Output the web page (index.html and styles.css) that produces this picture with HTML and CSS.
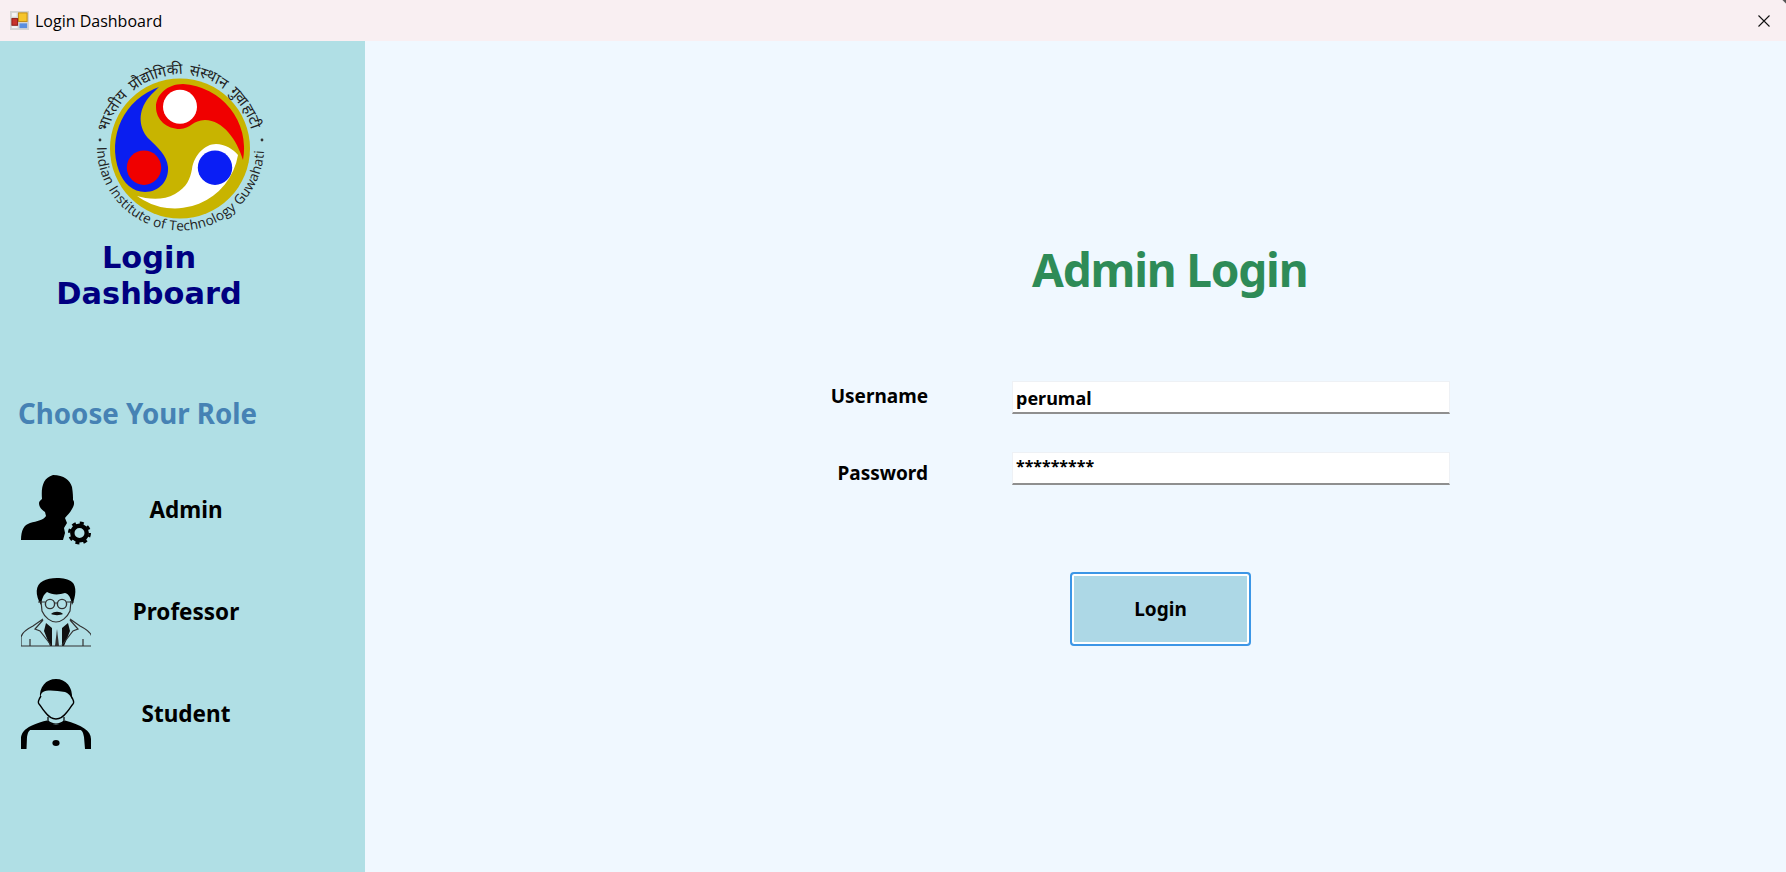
FILE: index.html
```html
<!DOCTYPE html>
<html lang="en">
<head>
    <meta charset="UTF-8">
    <meta name="viewport" content="width=device-width, initial-scale=1.0">
    <title>Login Dashboard</title>
    <link rel="stylesheet" href="styles.css">
</head>

<body>
    <header class="titlebar">
        <svg class="app-icon" viewBox="0 0 20 20">
            <rect x="0" y="0" width="20" height="20" fill="#d4d4d4"/>
            <rect x="9" y="2" width="9" height="9" fill="#f6c52c" stroke="#c08a10" stroke-width="1"/>
            <rect x="2" y="8" width="6" height="7" fill="#c8332b" stroke="#8a1a16" stroke-width="1"/>
            <rect x="10" y="13" width="8" height="5" fill="#5a8fe0"/>
            <rect x="2" y="2" width="5" height="4" fill="#f4f4f4"/>
            <rect x="2" y="16" width="6" height="2" fill="#f4f4f4"/>
        </svg>
        <span class="app-title">Login Dashboard</span>
        <svg class="close-icon" viewBox="0 0 12 12">
            <path d="M0.5 0.5L11.5 11.5M11.5 0.5L0.5 11.5" stroke="#111" stroke-width="1.1" fill="none"/>
        </svg>
    </header>

    <div class="window">
        <aside class="sidebar">
            <svg class="logo" viewBox="0 0 195 190">
                <defs>
                    <path id="arc-bottom" d="M12 92 A83.5 83.5 0 0 0 179 92"/>
                    <path id="arc-top" d="M22 81.5 A74 74 0 0 1 168.5 85"/>
                </defs>
                <circle cx="95" cy="93.5" r="70" fill="#c8b400"/>
                <path d="M74 32 A65 65 0 0 0 34 116 C38 128 48 137 60 137 C74 137 84 126 83 112 C82 100 72 92 64 84 C56 76 52 62 60 48 C64 41 69 37 74 32Z" fill="#0a1ef0"/>
                <path d="M158 105 A64.5 64.5 0 0 0 98 29 C82 29 71 40 71 52 C71 65 82 74 95 74 C105 74 108 65 120 65 C138 65 152 85 158 105Z" fill="#f00000"/>
                <path d="M153 100 A64 64 0 0 1 52 141 C62 144 78 146 90 139 C102 132 105 124 107 114 C109 100 120 89 131 89 C140 89 148 94 153 100Z" fill="#fff"/>
                <circle cx="95" cy="51.7" r="17" fill="#fff"/>
                <circle cx="59" cy="112.7" r="17.2" fill="#f00000"/>
                <circle cx="130" cy="112.7" r="17.2" fill="#0a1ef5"/>
                <circle cx="15" cy="85" r="1.4" fill="#333"/>
                <circle cx="177" cy="85" r="1.4" fill="#333"/>
                <text class="logo-text"><textPath href="#arc-bottom" textLength="258">Indian Institute of Technology Guwahati</textPath></text>
                <text class="logo-text logo-text-top"><textPath href="#arc-top" startOffset="4">भारतीय प्रौद्योगिकी संस्थान गुवाहाटी</textPath></text>
            </svg>

            <h1 class="brand">Login<br>Dashboard</h1>
            <h2 class="choose">Choose Your Role</h2>

            <div class="role">
                <svg class="role-icon" viewBox="11 4 70 70">
                    <path d="M11 69 C11 59 14 54 20 52 C27 50 34 49 36 45 L35 41 C31 38 29 36 29 32 C29 30 31 29 32 28 C31 16 33 7 43 4 C54 4 60 9 62 16 C63 22 63 26 63 29 C65 31 64 35 62 38 C60 42 57 44 55 47 L57 52 L54 57 L55 62 L53 69 Z" fill="#000"/>
                    <circle cx="69.5" cy="62" r="7.2" fill="none" stroke="#000" stroke-width="4.4"/>
                    <circle cx="69.5" cy="62" r="10.2" fill="none" stroke="#000" stroke-width="2.6" stroke-dasharray="4 4.01"/>
                </svg>
                <span class="role-name">Admin</span>
            </div>
            <div class="role">
                <svg class="role-icon" viewBox="11 6 70 70">
                    <path d="M31 34 C25 24 25 14 33 10 C40 6 56 6 62 11 C67 15 66 26 62 34 C61 27 59 23 55 22 C49 24 42 24 37 21 C33 24 32 28 31 34Z" fill="#000"/>
                    <path d="M31 30 L32 40 C35 47 41 51 46 51 C51 51 57 47 60 40 L61 30" fill="none" stroke="#333" stroke-width="1.2"/>
                    <circle cx="40" cy="33" r="4.6" fill="none" stroke="#333" stroke-width="1.4"/>
                    <circle cx="52" cy="33" r="4.6" fill="none" stroke="#333" stroke-width="1.4"/>
                    <path d="M44.6 32 H47.4 M28 31 H35.4 M56.6 31 H64" stroke="#333" stroke-width="1.2"/>
                    <path d="M41 43 C44 40 50 40 53 43 C50 44.5 44 44.5 41 43Z" fill="#111"/>
                    <path d="M36 52 L42 57 L42 75 L40 75 L34 60Z M58 52 L52 57 L52 75 L54 75 L60 60Z" fill="#111"/>
                    <path d="M47 58 L45 75 H49Z" fill="#333"/>
                    <path d="M11 75 V66 C12 62 17 58 23 55 L33 48 M82 75 V66 C81 62 76 58 70 55 L60 48 M11 75 H82 M33 49 L25 58 L30 60 L41 74 M60 49 L68 58 L63 60 L52 74 M20 68 V75 M73 68 V75" fill="none" stroke="#333" stroke-width="1.2"/>
                </svg>
                <span class="role-name">Professor</span>
            </div>
            <div class="role">
                <svg class="role-icon" viewBox="11 8 70 70">
                    <path d="M30 27 C29 16 36 8 46 8 C56 8 63 16 62 28 C60 24 58 22 55 21 C47 20 38 18 33 21 C31 22 31 24 30 27Z" fill="#000"/>
                    <path d="M31 25 C29 28 27 31 29 33 C31 35 32 38 35 41 C38 45 42 48 46 48 C50 48 54 45 57 41 C60 38 61 35 63 33 C65 31 63 28 61 25" fill="none" stroke="#000" stroke-width="1.4"/>
                    <path d="M38 46 V50 C42 54 50 54 54 50 V46" fill="none" stroke="#000" stroke-width="1.2"/>
                    <path d="M11 78 L11 68 C11 60 18 54 37 49.5 C42 55 50 55 55 49.5 C72 54 81 60 81 68 L81 78 H75 L74 66 C73 61 72 59 70 59 L21 59 C19 59 18 61 17 66 L16.5 78Z" fill="#000"/>
                    <ellipse cx="46" cy="72" rx="3.6" ry="3" fill="#000"/>
                </svg>
                <span class="role-name">Student</span>
            </div>
        </aside>

        <main class="content">
            <h2 class="form-title">Admin Login</h2>
            <form class="login-form">
                <label class="field-label" for="username">Username</label>
                <input class="field-input" type="text" id="username" value="perumal">
                <label class="field-label field-label-low" for="password">Password</label>
                <input class="field-input field-input-masked" type="text" id="password" value="*********">
            </form>
            <button class="login-btn" type="button">Login</button>
        </main>
    </div>
</body>
</html>
```

FILE: styles.css
```css
body {
    margin: 0;
    height: 872px;
    overflow: hidden;
    font-family: "Noto Sans", Tahoma, sans-serif;
    color: #000;
}

.titlebar {
    height: 41px;
    display: flex;
    align-items: center;
    padding-left: 10px;
    padding-right: 16px;
    background: linear-gradient(225deg, #555 2px, transparent 3px), #f9eff2;
}

.app-icon {
    width: 19px;
    height: 19px;
    margin-right: 6px;
}

.app-title {
    font-family: "Open Sans", sans-serif;
    font-size: 16px;
    flex: 1;
}

.close-icon {
    width: 12px;
    height: 12px;
}

.window {
    display: flex;
    height: 831px;
}

.sidebar {
    width: 365px;
    background-color: #b0dfe5;
    flex-shrink: 0;
}

.logo {
    display: block;
    width: 195px;
    height: 190px;
    margin-left: 85px;
    margin-top: 14px;
}

.logo-text {
    font-family: "Open Sans", sans-serif;
    font-size: 13.5px;
    fill: #222;
}

.logo-text-top {
    font-size: 15px;
    word-spacing: 2px;
}

.brand {
    margin: -5px 0 0 0;
    width: 298px;
    text-align: center;
    font-family: "DejaVu Sans", Verdana, sans-serif;
    font-size: 30.4px;
    line-height: 36px;
    font-weight: bold;
    color: #000080;
}

.choose {
    margin: 83px 0 0 18px;
    font-size: 27.7px;
    line-height: 36px;
    font-weight: bold;
    color: #4682b4;
}

.role {
    display: flex;
    align-items: center;
    height: 70px;
    margin-top: 32px;
    padding-left: 21px;
}

.role:first-of-type {
    margin-top: 44px;
}

.role-icon {
    width: 70px;
    height: 70px;
}

.role-name {
    width: 190px;
    padding-bottom: 2px;
    text-align: center;
    font-size: 22.5px;
    font-weight: bold;
}

.content {
    flex: 1;
    background-color: #f0f8ff;
}

.form-title {
    margin: 0 0 0 667px;
    padding-top: 197px;
    font-size: 46px;
    line-height: 62px;
    letter-spacing: -1.2px;
    font-weight: bold;
    color: #2e8b57;
}

.login-form {
    display: grid;
    grid-template-columns: 143px 438px;
    column-gap: 84px;
    row-gap: 38px;
    margin: 81px 0 0 420px;
}

.field-label {
    padding-top: 1px;
    text-align: right;
    font-size: 19px;
    font-weight: bold;
    line-height: 28px;
}

.field-label-low {
    margin-top: 6px;
}

.field-input {
    box-sizing: border-box;
    width: 438px;
    height: 33px;
    padding: 1px 3px 0;
    background-color: #fff;
    border: 1px solid #eef1f5;
    border-bottom: 2px solid #8f8f8f;
    outline: none;
    font-family: "Noto Sans", Tahoma, sans-serif;
    font-size: 18px;
    font-weight: bold;
    color: #000;
}

.field-input-masked {
    padding-bottom: 5px;
    font-size: 16px;
}

.login-btn {
    display: block;
    box-sizing: border-box;
    width: 181px;
    height: 74px;
    margin: 85px 0 0 705px;
    background-color: #add8e6;
    border: 2px solid #3c96e6;
    box-shadow: inset 0 0 0 2px #fff;
    border-radius: 4px;
    font-family: "Noto Sans", Tahoma, sans-serif;
    font-size: 19px;
    font-weight: bold;
    color: #000;
}
```
